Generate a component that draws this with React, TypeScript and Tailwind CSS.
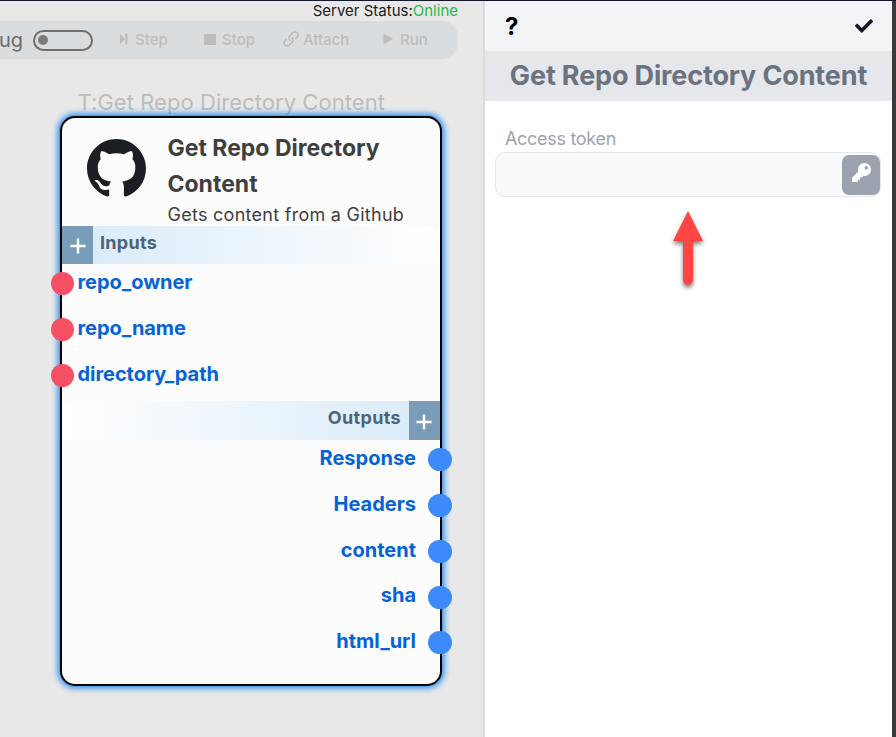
import React from "react";
import { BsGithub } from "react-icons/bs";
import { FaKey, FaCheck } from "react-icons/fa";
import { ImLink } from "react-icons/im";

const inputs = ["repo_owner", "repo_name", "directory_path"];
const outputs = ["Response", "Headers", "content", "sha", "html_url"];

function Plus() {
  return (
    <svg width="16" height="16" viewBox="0 0 16 16" className="block">
      <path d="M8 0.5V15.5M0.5 8H15.5" stroke="white" strokeWidth="2.4" />
    </svg>
  );
}

function Toolbar() {
  return (
    <div className="flex h-[38px] w-[458px] items-center rounded-r-[16px] bg-[#d9dde0] text-[15px] font-medium text-[#bdbdbd]">
      <span className="-ml-px w-[34px] text-[20px] font-normal text-[#6b6b6b]">ug</span>
      <div className="flex h-[21px] w-[60px] items-center rounded-full border-2 border-[#6f6f6f] pl-[3px]">
        <div className="h-[10px] w-[10px] rounded-full bg-[#7a7a7a]" />
      </div>
      <div className="flex w-[111px] items-center pl-[27px]">
        <svg width="8" height="12" viewBox="0 0 8 12" className="mb-[2px] mr-[7px] shrink-0">
          <path d="M0 1L5.3 6L0 11ZM5.3 0.5H7.6V11.5H5.3Z" fill="#bdbdbd" />
        </svg>
        Step
      </div>
      <div className="flex w-[79px] items-center">
        <div className="mb-[2px] mr-[6px] h-[11px] w-[12px] bg-[#bdbdbd]" />
        Stop
      </div>
      <div className="flex w-[100px] items-center">
        <ImLink size={16} className="mb-[2px] mr-1 shrink-0" />
        Attach
      </div>
      <svg width="10" height="12" viewBox="0 0 10 12" className="mb-[2px] mr-[7px] shrink-0">
        <path d="M0.5 0.5L10 6L0.5 11.5Z" fill="#bdbdbd" />
      </svg>
      Run
    </div>
  );
}

function NodeCard() {
  return (
    <div className="absolute left-[60px] top-[116px] h-[570px] w-[382px] rounded-[15px] border-2 border-black bg-[#fcfcfc] shadow-[0_0_6px_2px_#1c86ee]">
      <div className="flex h-[108px] pl-[25px]">
        <BsGithub size={59} className="mt-[20.5px] shrink-0 text-[#1b1f23]" />
        <div className="ml-[21.5px] whitespace-nowrap text-[#3f3f3f]">
          <h2 className="mt-[12px] text-[23px] font-bold leading-9">
            Get Repo Directory
            <br />
            Content
          </h2>
          <p className="text-[18px] leading-[25px] tracking-[0.27px]">Gets content from a Github</p>
        </div>
      </div>
      <div className="flex h-[38px] items-center bg-linear-to-r from-[#d8eaf8] to-white">
        <div className="flex h-full w-[31px] items-center justify-center bg-[#799cb8] pt-[2px]">
          <Plus />
        </div>
        <span className="mb-[5px] ml-[7px] text-[18px] font-bold tracking-[0.3px] text-[#4b647d]">Inputs</span>
      </div>
      <div className="-mt-[3px] h-[140px]">
        {inputs.map((name) => (
          <div key={name} className="-ml-[11px] flex h-[45.8px] items-center">
            <div className="h-[23px] w-[23px] shrink-0 rounded-full bg-[#f55064]" />
            <span className="mb-[3px] ml-[3.5px] text-[20px] font-bold tracking-[-0.05px] text-[#0563d6]">{name}</span>
          </div>
        ))}
      </div>
      <div className="flex h-[39px] items-center justify-end bg-linear-to-r from-white to-[#d8eaf8]">
        <span className="mb-[6px] mr-[8px] text-[18px] font-bold tracking-[0.35px] text-[#4b647d]">Outputs</span>
        <div className="flex h-full w-[31px] items-center justify-center bg-[#799cb8] pr-px pt-[3px]">
          <Plus />
        </div>
      </div>
      <div className="-mt-[3px]">
        {outputs.map((name) => (
          <div key={name} className="-mr-[12px] flex h-[45.75px] items-center justify-end">
            <span className="mb-[3.5px] mr-[12px] text-[20px] font-bold text-[#0563d6]">{name}</span>
            <div className="h-[23px] w-[24px] shrink-0 rounded-full bg-[#3d8bfa]" />
          </div>
        ))}
      </div>
    </div>
  );
}

function SidePanel() {
  return (
    <aside className="w-[407px] shrink-0 bg-white">
      <div className="flex h-[50px] items-center justify-between bg-[#f3f4f6] pl-[20px] pr-[19.5px] text-[#111827]">
        <span className="pt-[2px] text-[24px] font-bold text-black">?</span>
        <FaCheck size={18} />
      </div>
      <h1 className="flex h-[50px] items-center justify-center whitespace-nowrap bg-[#e5e7eb] text-[27px] font-bold tracking-[-0.15px] text-[#6b7280]">
        Get Repo Directory Content
      </h1>
      <div className="px-[10px] pt-[25px]">
        <label className="block h-[26px] pl-[10px] text-[18px] leading-[26px] tracking-[-0.3px] text-[#9ca3af]">Access token</label>
        <div className="flex h-[45px] w-[386px] justify-end rounded-[10px] border border-[#e5e7eb] bg-[#f9fafb] pt-[2px]">
          <button className="flex h-10 w-[38px] items-start justify-center rounded-[7px] bg-[#9ca3af] pt-[7.5px] text-white">
            <FaKey size={19} />
          </button>
        </div>
        <svg width="40" height="84" viewBox="0 0 40 84" className="ml-[173px] mt-[13px] drop-shadow-[0_3px_2px_rgba(0,0,0,0.5)]">
          <path d="M20 1L35 31H25V70A5 5 0 0 1 15 70V31H5Z" fill="#ff4444" />
        </svg>
      </div>
    </aside>
  );
}

export default function App() {
  return (
    <div className="flex h-[737px] w-[896px] flex-col overflow-hidden bg-[#e8e8e8] font-['Inter',sans-serif]">
      <div className="h-px shrink-0 bg-[#15152b]" />
      <div className="flex flex-1">
        <main className="w-[485px] shrink-0 border-r-2 border-[#d9dde0]">
          <div className="flex h-[20px] w-[458px] items-center justify-end text-[15px] text-[#1a1a1a]">
            Server Status:<span className="text-[#22bb44]">Online</span>
          </div>
          <Toolbar />
          <div className="pl-[77.5px] pt-[27px] text-[22px] leading-[32px] tracking-[0.05px] text-[#bdbdbd]">T:Get Repo Directory Content</div>
          <NodeCard />
        </main>
        <SidePanel />
        <div className="w-1 bg-[#3a3a3a]" />
      </div>
    </div>
  );
}
